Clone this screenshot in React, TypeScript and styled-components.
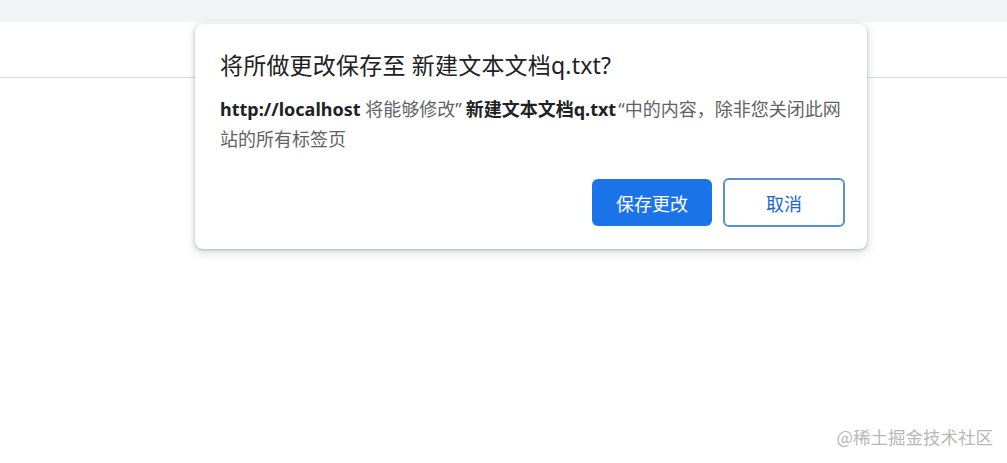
import React from "react";
import styled, { createGlobalStyle } from "styled-components";

const Global = createGlobalStyle`
  html, body { margin: 0; padding: 0; background: #ffffff; }
  body { font-family: "Noto Sans", "Noto Sans CJK SC", sans-serif; }
  #root { width: 1007px; height: 463px; position: relative; overflow: hidden; }
`;

const Page = styled.div`
  width: 1007px;
  height: 463px;
  position: relative;
  background: #ffffff;
`;

const TabStrip = styled.div`
  height: 22px;
  background: #f1f3f4;
`;

const Toolbar = styled.div`
  height: 55px;
  background: #ffffff;
  border-bottom: 1px solid #dadce0;
`;

const Dialog = styled.div`
  position: absolute;
  left: 195px;
  top: 24px;
  width: 672px;
  height: 225px;
  box-sizing: border-box;
  padding: 24px 22px 22px 25px;
  background: #ffffff;
  border-radius: 8px;
  box-shadow: 0 1px 3px rgba(60, 64, 67, 0.3), 0 3px 8px 2px rgba(60, 64, 67, 0.15);
  display: flex;
  flex-direction: column;
`;

const Title = styled.h1`
  margin: 0;
  font-family: "Noto Sans", "Noto Sans CJK SC", sans-serif;
  font-weight: 400;
  font-size: 23px;
  line-height: 34px;
  color: #202124;
  letter-spacing: 0.2px;
`;

const Body = styled.p`
  margin: 12px 0 0;
  font-family: "Noto Sans", "Noto Sans CJK SC", sans-serif;
  font-size: 18px;
  line-height: 30px;
  color: #5f6368;
`;

const Strong = styled.b`
  font-weight: 700;
  color: #202124;
`;

const Quote = styled.span<{ $open?: boolean }>`
  margin: ${(p) => (p.$open ? "0 0 0 2px" : "0 4px 0 0")};
`;

const Actions = styled.div`
  margin-top: auto;
  display: flex;
  justify-content: flex-end;
  gap: 11px;
`;

const Button = styled.button<{ $primary?: boolean }>`
  box-sizing: border-box;
  width: ${(p) => (p.$primary ? "120px" : "122px")};
  height: ${(p) => (p.$primary ? "47px" : "49px")};
  margin-top: ${(p) => (p.$primary ? "1px" : "0")};
  border-radius: 6px;
  font-family: "Noto Sans CJK SC", sans-serif;
  font-size: 18px;
  cursor: pointer;
  background: ${(p) => (p.$primary ? "#1a73e8" : "#ffffff")};
  color: ${(p) => (p.$primary ? "#ffffff" : "#1a67d2")};
  border: ${(p) => (p.$primary ? "none" : "2px solid #5b8ddb")};
`;

const Watermark = styled.div`
  position: absolute;
  right: 14px;
  bottom: 15px;
  font-family: "Noto Sans CJK SC", sans-serif;
  font-size: 17.5px;
  line-height: 22px;
  color: #b8b8b8;
  text-shadow: 0 0 1px #ffffff;
`;

export default function App() {
  return (
    <>
      <Global />
      <Page>
        <TabStrip />
        <Toolbar />
        <Dialog>
          <Title>将所做更改保存至 新建文本文档q.txt?</Title>
          <Body>
            <Strong>http://localhost</Strong> 将能够修改<Quote>”</Quote>
            <Strong>新建文本文档q.txt</Strong>
            <Quote $open>“</Quote>中的内容，除非您关闭此网站的所有标签页
          </Body>
          <Actions>
            <Button $primary>保存更改</Button>
            <Button>取消</Button>
          </Actions>
        </Dialog>
        <Watermark>@稀土掘金技术社区</Watermark>
      </Page>
    </>
  );
}
